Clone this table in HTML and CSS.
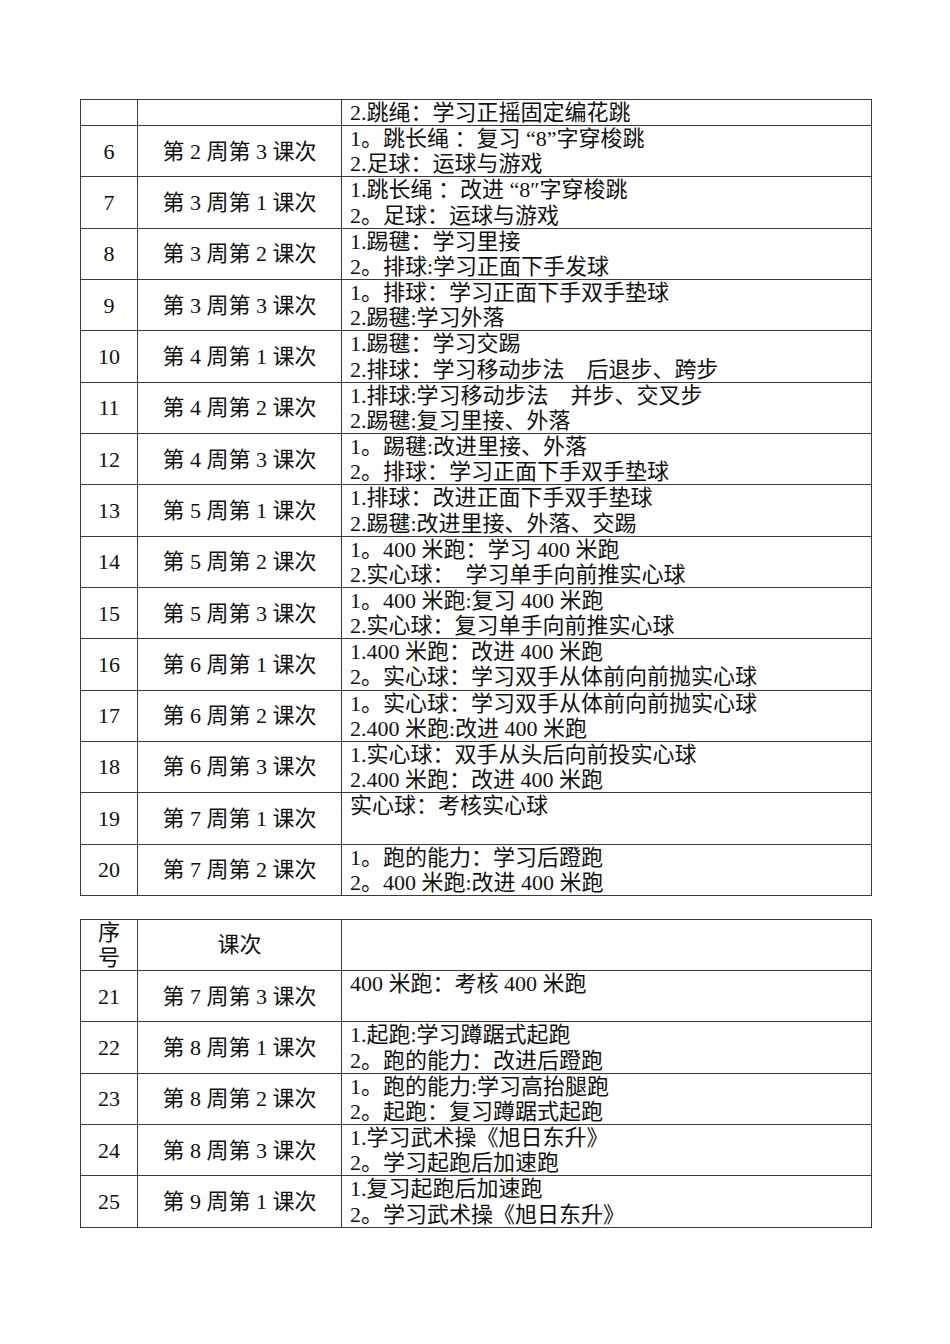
FILE: index.html
```html
<!DOCTYPE html>
<html lang="zh-CN">
<head>
<meta charset="utf-8">
<title>课次安排</title>
<link rel="stylesheet" href="styles.css">
</head>
<body>
<div class="page">
  <table class="plan">
    <colgroup><col class="c-no"><col class="c-week"><col class="c-content"></colgroup>
    <tr class="row-first"><td class="num"></td><td class="week"></td><td class="content">2.跳绳：学习正摇固定编花跳</td></tr>
    <tr class="row"><td class="num">6</td><td class="week">第 2 周第 3 课次</td><td class="content">1。跳长绳 ：复习 “8”字穿梭跳<br>2.足球：运球与游戏</td></tr>
    <tr class="row"><td class="num">7</td><td class="week">第 3 周第 1 课次</td><td class="content">1.跳长绳 ：改进 “8″字穿梭跳<br>2。足球：运球与游戏</td></tr>
    <tr class="row"><td class="num">8</td><td class="week">第 3 周第 2 课次</td><td class="content">1.踢毽：学习里接<br>2。排球:学习正面下手发球</td></tr>
    <tr class="row"><td class="num">9</td><td class="week">第 3 周第 3 课次</td><td class="content">1。排球：学习正面下手双手垫球<br>2.踢毽:学习外落</td></tr>
    <tr class="row"><td class="num">10</td><td class="week">第 4 周第 1 课次</td><td class="content">1.踢毽：学习交踢<br>2.排球：学习移动步法　后退步、跨步</td></tr>
    <tr class="row"><td class="num">11</td><td class="week">第 4 周第 2 课次</td><td class="content">1.排球:学习移动步法　并步、交叉步<br>2.踢毽:复习里接、外落</td></tr>
    <tr class="row"><td class="num">12</td><td class="week">第 4 周第 3 课次</td><td class="content">1。踢毽:改进里接、外落<br>2。排球：学习正面下手双手垫球</td></tr>
    <tr class="row"><td class="num">13</td><td class="week">第 5 周第 1 课次</td><td class="content">1.排球：改进正面下手双手垫球<br>2.踢毽:改进里接、外落、交踢</td></tr>
    <tr class="row"><td class="num">14</td><td class="week">第 5 周第 2 课次</td><td class="content">1。400 米跑：学习 400 米跑<br>2.实心球：　学习单手向前推实心球</td></tr>
    <tr class="row"><td class="num">15</td><td class="week">第 5 周第 3 课次</td><td class="content">1。400 米跑:复习 400 米跑<br>2.实心球：复习单手向前推实心球</td></tr>
    <tr class="row"><td class="num">16</td><td class="week">第 6 周第 1 课次</td><td class="content">1.400 米跑：改进 400 米跑<br>2。实心球：学习双手从体前向前抛实心球</td></tr>
    <tr class="row"><td class="num">17</td><td class="week">第 6 周第 2 课次</td><td class="content">1。实心球：学习双手从体前向前抛实心球<br>2.400 米跑:改进 400 米跑</td></tr>
    <tr class="row"><td class="num">18</td><td class="week">第 6 周第 3 课次</td><td class="content">1.实心球：双手从头后向前投实心球<br>2.400 米跑：改进 400 米跑</td></tr>
    <tr class="row"><td class="num">19</td><td class="week">第 7 周第 1 课次</td><td class="content">实心球：考核实心球</td></tr>
    <tr class="row"><td class="num">20</td><td class="week">第 7 周第 2 课次</td><td class="content">1。跑的能力：学习后蹬跑<br>2。400 米跑:改进 400 米跑</td></tr>
  </table>

  <table class="plan">
    <colgroup><col class="c-no"><col class="c-week"><col class="c-content"></colgroup>
    <tr class="row"><td class="num head-no">序<br>号</td><td class="week">课次</td><td class="content"></td></tr>
    <tr class="row"><td class="num">21</td><td class="week">第 7 周第 3 课次</td><td class="content">400 米跑：考核 400 米跑</td></tr>
    <tr class="row"><td class="num">22</td><td class="week">第 8 周第 1 课次</td><td class="content">1.起跑:学习蹲踞式起跑<br>2。跑的能力：改进后蹬跑</td></tr>
    <tr class="row"><td class="num">23</td><td class="week">第 8 周第 2 课次</td><td class="content">1。跑的能力:学习高抬腿跑<br>2。起跑：复习蹲踞式起跑</td></tr>
    <tr class="row"><td class="num">24</td><td class="week">第 8 周第 3 课次</td><td class="content">1.学习武术操《旭日东升》<br>2。学习起跑后加速跑</td></tr>
    <tr class="row"><td class="num">25</td><td class="week">第 9 周第 1 课次</td><td class="content">1.复习起跑后加速跑<br>2。学习武术操《旭日东升》</td></tr>
  </table>
</div>
</body>
</html>
```
FILE: styles.css
```css
html, body {
  margin: 0;
  padding: 0;
  background: #ffffff;
}

.page {
  padding: 99px 0 0 80px;
  display: flex;
  flex-direction: column;
  gap: 23px;
  font-family: "Liberation Serif", "Noto Sans CJK SC", serif;
  font-size: 22px;
  color: #111111;
}

.plan {
  border-collapse: collapse;
  table-layout: fixed;
  width: 791px;
}

.c-no { width: 57px; }
.c-week { width: 204px; }
.c-content { width: 530px; }

.plan td {
  border: 1px solid #3a3a3a;
  padding: 0 8px;
  line-height: 25.15px;
  white-space: nowrap;
}

.row { height: 51.3px; }
.row-first { height: 26px; }

.num, .week {
  text-align: center;
  vertical-align: middle;
}

.content {
  text-align: left;
  vertical-align: top;
}

.head-no {
  padding: 0;
}
```
